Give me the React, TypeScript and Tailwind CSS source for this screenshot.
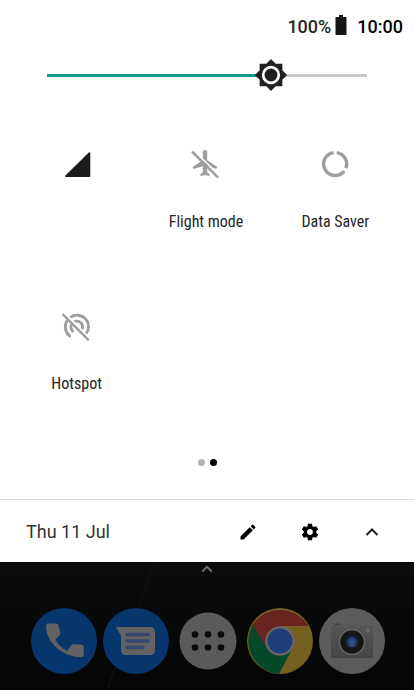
import { useState } from 'react';
import type { ReactNode } from 'react';

function SignalIcon() {
  return (
    <svg viewBox="0 0 32 32" className="w-8 h-8" fill="#1b1b1b" aria-hidden="true">
      <path d="M27.800 4.600c.6-.6 1.500-.3 1.500.5V28c0 .6-.3.9-.9.9H5c-.9 0-1.200-.8-.6-1.400z" />
    </svg>
  );
}

function FlightOffIcon() {
  return (
    <svg viewBox="0 0 32 32" className="w-8 h-8" aria-hidden="true">
      <path
        fill="#9e9e9e"
        d="M15 2c-1.200 0-2.200.9-2.200 2v8.200L3.300 18.400c-.4.300-.6.700-.5 1.300.1.900.7 1.200 1.400 1l8.600-2.500v6l-2.200 1.900c-.5.500-.4 2 .6 1.900L15 27l3.800 1c1 .1 1.100-1.400.6-1.900l-2.200-1.900v-6l8.600 2.500c.7.200 1.300-.1 1.400-1 .1-.6-.1-1-.5-1.300l-9.500-6.200V4c0-1.100-1-2-2.200-2z"
      />
      <path d="M4.300 2.700L30 28.400" stroke="#fff" strokeWidth="1.500" />
      <path d="M3 4.500L27.300 28.800" stroke="#9e9e9e" strokeWidth="2.500" strokeLinecap="square" />
    </svg>
  );
}

function DataSaverIcon() {
  return (
    <svg viewBox="0 0 32 32" className="w-8 h-8" fill="none" stroke="#9e9e9e" strokeWidth="3.400" aria-hidden="true">
      <path d="M17.700 4.600A11.500 11.500 0 0 1 26.900 20.200" />
      <path d="M14.700 4.600A11.500 11.500 0 1 0 25.200 23.100" />
    </svg>
  );
}

function HotspotOffIcon() {
  return (
    <svg viewBox="0 0 32 32" className="w-8 h-8" fill="none" stroke="#9e9e9e" strokeWidth="2.800" aria-hidden="true">
      <path d="M8.700 25.800A11.400 11.400 0 0 1 6.600 9.900" strokeLinecap="round" />
      <path d="M9.900 7A11.400 11.400 0 0 1 25 23.700" strokeLinecap="round" />
      <path d="M11.700 20.900A5.900 5.900 0 0 1 10.700 14" strokeLinecap="round" />
      <path d="M14.200 11.300A5.900 5.900 0 0 1 21.400 18.500" strokeLinecap="round" />
      <path d="M4 3.200L29.500 28.700" stroke="#fff" strokeWidth="1.400" />
      <path d="M2.500 5L27 29.500" strokeWidth="2.400" strokeLinecap="square" />
    </svg>
  );
}

function ChevronUp({ className }: { className: string }) {
  return (
    <svg viewBox="0 0 16 16" className={className} fill="none" stroke="currentColor" strokeWidth="2" aria-hidden="true">
      <path d="M2.500 11L8 5.500l5.500 5.500" />
    </svg>
  );
}

function Tile({ icon, label, name }: { icon: ReactNode; label?: string; name?: string }) {
  return (
    <button type="button" aria-label={name} className="flex h-[114px] flex-col items-center gap-8">
      {icon}
      <span className="text-base leading-5 text-[#262626] font-['Roboto_Condensed',Roboto,sans-serif]">{label}</span>
    </button>
  );
}

function PhoneApp() {
  return (
    <svg viewBox="0 0 66 66" className="w-full" aria-hidden="true">
      <circle cx="33" cy="33" r="33" fill="#07366d" />
      <path
        fill="#626262"
        d="M17.500 15.500h7.300c1.500 0 2.400.8 2.700 2.200l1.700 7.100c.2 1-.1 1.900-.8 2.600l-4 4c2.600 5 6.500 8.900 11.600 11.600l4.200-5.700c.6-.9 1.500-1.200 2.500-1.100l7.700.6c1.500.2 2.400 1.100 2.400 2.600v7c0 1.700-1 2.700-2.700 2.700C31 49 15 33.500 15 18.200c0-1.700.9-2.700 2.500-2.700z"
      />
    </svg>
  );
}

function MessagesApp() {
  return (
    <svg viewBox="0 0 66 66" className="w-full" aria-hidden="true">
      <circle cx="33" cy="33" r="33" fill="#07366d" />
      <path fill="#626262" d="M13 19h34.500c2.500 0 4.500 2 4.500 4.500v19c0 2.500-2 4.500-4.500 4.500h-25c-2.500 0-4.500-2-4.500-4.500V28z" />
      <path d="M24 26.500h21M24 33h21M24 39.500h16" stroke="#35466f" strokeWidth="3.400" strokeLinecap="round" />
    </svg>
  );
}

function DrawerApp() {
  return (
    <svg viewBox="0 0 66 66" className="w-full" aria-hidden="true">
      <circle cx="33" cy="33" r="28.500" fill="#5a5a5a" />
      {[26.5, 39.5].map(y => [20, 33, 46].map(x => (
        <circle key={`${x}-${y}`} cx={x} cy={y} r="3.300" fill="#0b0b0b" />
      )))}
    </svg>
  );
}

function ChromeApp() {
  return (
    <svg viewBox="0 0 66 66" className="w-full" aria-hidden="true">
      <circle cx="33" cy="33" r="33" fill="#766020" />
      <path d="M5.800 16.500A33 33 0 0 0 32 66L45.500 40.500 20.500 40.500z" fill="#07482a" />
      <path d="M5.500 17A33 33 0 0 1 61.500 18L33 18 19.500 39z" fill="#692420" />
      <circle cx="33" cy="33" r="14.800" fill="#676767" />
      <circle cx="33" cy="33" r="12.500" fill="#203f78" />
    </svg>
  );
}

function CameraApp() {
  return (
    <svg viewBox="0 0 66 66" className="w-full" aria-hidden="true">
      <defs>
        <linearGradient id="body" x1="0" y1="0" x2="0" y2="1">
          <stop offset="0" stopColor="#565656" />
          <stop offset="1" stopColor="#464646" />
        </linearGradient>
        <radialGradient id="lens">
          <stop offset="0" stopColor="#315b86" />
          <stop offset=".55" stopColor="#263a70" />
          <stop offset="1" stopColor="#11192d" />
        </radialGradient>
      </defs>
      <circle cx="33" cy="33" r="33" fill="#5c5c5c" />
      <path d="M15 17l1-1.500h5l1 1.500z" fill="#434343" />
      <rect x="12" y="17" width="42" height="33" rx="1.500" fill="url(#body)" />
      <circle cx="49" cy="22.500" r="2" fill="#686868" />
      <circle cx="33" cy="34" r="13" fill="#6a6a6a" />
      <circle cx="33" cy="34" r="11.700" fill="#151515" />
      <circle cx="33" cy="34" r="6.500" fill="url(#lens)" />
      <ellipse cx="33" cy="37" rx="3" ry="1.500" fill="#4b3b79" />
    </svg>
  );
}

export default function App() {
  const [brightness, setBrightness] = useState(70);

  const apps = [
    { name: 'Phone', icon: <PhoneApp /> },
    { name: 'Messages', icon: <MessagesApp /> },
    { name: 'All apps', icon: <DrawerApp /> },
    { name: 'Chrome', icon: <ChromeApp /> },
    { name: 'Camera', icon: <CameraApp /> },
  ];

  return (
    <div className="flex min-h-screen flex-col bg-white font-[Roboto,sans-serif]">
      <header className="flex h-[53px] items-center justify-end pr-[11px] text-lg font-medium leading-6 text-black">
        <span className="text-[#262626]">100%</span>
        <svg viewBox="0 0 12 20" className="mr-2.5 mb-1 ml-1 h-5 w-3" fill="#151515" aria-hidden="true">
          <path d="M4 0h4v2h2.500c.6 0 1 .4 1 1v16c0 .6-.4 1-1 1h-9c-.6 0-1-.4-1-1V3c0-.6.400-1 1-1H4z" />
        </svg>
        <time>10:00</time>
      </header>

      <div className="mx-[47px] mt-1.5">
        <div className="relative flex h-8 items-center">
          <div className="h-[3px] w-full bg-[#c8c8c8]">
            <div className="h-full bg-[#1b998b]" style={{ width: `${brightness}%` }} />
          </div>
          <svg
            viewBox="0 0 24 24"
            className="absolute h-[34px] w-[34px] -translate-x-1/2"
            style={{ left: `${brightness}%` }}
            aria-hidden="true"
          >
            <path fill="#202020" d="M20 8.690V4h-4.690L12 .690 8.690 4H4v4.690L.690 12 4 15.310V20h4.690L12 23.310 15.310 20H20v-4.690L23.310 12z" />
            <circle cx="12" cy="12" r="5.500" fill="none" stroke="#fff" strokeWidth="1.900" />
          </svg>
          <input
            type="range"
            min="0"
            max="100"
            aria-label="Brightness"
            value={brightness}
            onChange={e => setBrightness(Number(e.target.value))}
            className="absolute inset-0 w-full cursor-pointer opacity-0"
          />
        </div>
      </div>

      <main className="mt-[57px] grid grid-cols-3 gap-y-12 pr-3.5 pl-3">
        <Tile icon={<SignalIcon />} name="Mobile data" />
        <Tile icon={<FlightOffIcon />} label="Flight mode" />
        <Tile icon={<DataSaverIcon />} label="Data Saver" />
        <Tile icon={<HotspotOffIcon />} label="Hotspot" />
      </main>

      <div className="mt-[35px] flex justify-center gap-[5px]">
        <span className="h-[7px] w-[7px] rounded-full bg-[#b3b3b3]" />
        <span className="h-[7px] w-[7px] rounded-full bg-black" />
      </div>

      <footer className="mt-[33px] flex h-[63px] items-center border-t border-[#e0e0e0] pt-px pr-8 pl-[26px]">
        <span className="flex-1 text-lg leading-6 text-[#333]">Thu 11 Jul</span>
        <div className="flex items-center gap-[42px] text-black">
          <button type="button" aria-label="Edit">
            <svg viewBox="0 0 24 24" className="h-5 w-5" fill="currentColor" aria-hidden="true">
              <path d="M3 17.250V21h3.750L17.810 9.940l-3.750-3.750L3 17.250zM20.710 7.040a1 1 0 0 0 0-1.410l-2.340-2.340a1 1 0 0 0-1.410 0l-1.830 1.830 3.750 3.750 1.830-1.830z" />
            </svg>
          </button>
          <button type="button" aria-label="Settings">
            <svg viewBox="0 0 24 24" className="h-5 w-5" fill="currentColor" aria-hidden="true">
              <path d="M19.430 12.980c.04-.32.07-.64.07-.98s-.03-.66-.07-.98l2.110-1.650c.19-.15.24-.42.12-.64l-2-3.460c-.12-.22-.39-.3-.61-.22l-2.490 1c-.52-.4-1.080-.73-1.690-.98l-.38-2.650C14.460 2.180 14.250 2 14 2h-4c-.25 0-.46.18-.49.42l-.38 2.650c-.61.25-1.170.59-1.690.98l-2.490-1c-.23-.09-.49 0-.61.22l-2 3.460c-.13.22-.07.49.12.64l2.110 1.650c-.04.32-.07.65-.07.98s.03.66.07.98l-2.110 1.650c-.19.15-.24.42-.12.64l2 3.460c.12.22.39.3.61.22l2.490-1c.52.4 1.080.73 1.690.98l.38 2.650c.03.24.24.42.49.42h4c.25 0 .46-.18.49-.42l.38-2.650c.61-.25 1.170-.59 1.690-.98l2.490 1c.23.09.49 0 .61-.22l2-3.460c.12-.22.07-.49-.12-.64l-2.110-1.650zM12 15.500c-1.930 0-3.500-1.570-3.500-3.500s1.570-3.500 3.500-3.500 3.500 1.570 3.500 3.500-1.570 3.500-3.500 3.500z" />
            </svg>
          </button>
          <button type="button" aria-label="Collapse" className="flex w-5 justify-center text-[#222]">
            <ChevronUp className="h-4 w-4" />
          </button>
        </div>
      </footer>

      <section className="relative isolate flex flex-1 flex-col items-center bg-linear-to-b from-[#0b0c0d] to-[#050505] pb-4">
        {/* wallpaper crease */}
        <svg
          viewBox="0 0 414 128"
          preserveAspectRatio="none"
          className="absolute inset-0 -z-10 h-full w-full"
          aria-hidden="true"
        >
          <path d="M155 0L107 128" stroke="#141414" />
        </svg>
        <ChevronUp className="h-3.5 w-5 text-[#777]" />
        <nav className="mt-8 flex gap-1.5 pl-0.5">
          {apps.map(app => (
            <button key={app.name} type="button" aria-label={app.name} className="w-[66px]">
              {app.icon}
            </button>
          ))}
        </nav>
      </section>
    </div>
  );
}
